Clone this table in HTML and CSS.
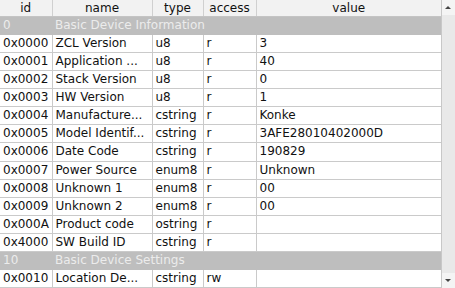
FILE: index.html
```html
<!DOCTYPE html>
<html lang="en">
<head>
  <meta charset="UTF-8">
  <title>Basic cluster attributes</title>
  <link rel="stylesheet" href="styles.css">
</head>
<body>
  <div class="view">
    <table class="attr-table">
      <colgroup>
        <col class="col-id">
        <col class="col-name">
        <col class="col-type">
        <col class="col-access">
        <col class="col-value">
      </colgroup>
      <thead>
        <tr>
          <th>id</th>
          <th>name</th>
          <th>type</th>
          <th>access</th>
          <th>value</th>
        </tr>
      </thead>
      <tbody>
        <tr class="group"><td>0</td><td colspan="4">Basic Device Information</td></tr>
        <tr><td>0x0000</td><td>ZCL Version</td><td>u8</td><td>r</td><td>3</td></tr>
        <tr><td>0x0001</td><td>Application ...</td><td>u8</td><td>r</td><td>40</td></tr>
        <tr><td>0x0002</td><td>Stack Version</td><td>u8</td><td>r</td><td>0</td></tr>
        <tr><td>0x0003</td><td>HW Version</td><td>u8</td><td>r</td><td>1</td></tr>
        <tr><td>0x0004</td><td>Manufacture...</td><td>cstring</td><td>r</td><td>Konke</td></tr>
        <tr><td>0x0005</td><td>Model Identif...</td><td>cstring</td><td>r</td><td>3AFE28010402000D</td></tr>
        <tr><td>0x0006</td><td>Date Code</td><td>cstring</td><td>r</td><td>190829</td></tr>
        <tr><td>0x0007</td><td>Power Source</td><td>enum8</td><td>r</td><td>Unknown</td></tr>
        <tr><td>0x0008</td><td>Unknown 1</td><td>enum8</td><td>r</td><td>00</td></tr>
        <tr><td>0x0009</td><td>Unknown 2</td><td>enum8</td><td>r</td><td>00</td></tr>
        <tr><td>0x000A</td><td>Product code</td><td>ostring</td><td>r</td><td></td></tr>
        <tr><td>0x4000</td><td>SW Build ID</td><td>cstring</td><td>r</td><td></td></tr>
        <tr class="group"><td>10</td><td colspan="4">Basic Device Settings</td></tr>
        <tr><td>0x0010</td><td>Location De...</td><td>cstring</td><td>rw</td><td></td></tr>
      </tbody>
    </table>

    <div class="scrollbar">
      <div class="arrow arrow-up"></div>
      <div class="track"></div>
      <div class="arrow arrow-down"></div>
    </div>
  </div>
</body>
</html>
```

FILE: styles.css
```css
body {
  margin: 0;
  font-family: 'DejaVu Sans', sans-serif;
  font-size: 12px;
  color: #111;
  background-color: #ffffff;
}
.view {
  display: flex;
  width: 455px;
  height: 288px;
  overflow: hidden;
}
.attr-table {
  width: 441px;
  table-layout: fixed;
  border-collapse: collapse;
  flex: none;
  font-size: 12px;
}
.col-id { width: 52px; }
.col-name { width: 100px; }
.col-type { width: 51px; }
.col-access { width: 53px; }
.col-value { width: 185px; }
.attr-table th {
  height: 16px;
  padding: 0;
  font-weight: normal;
  text-align: center;
  background-color: #f2f2f2;
  border-right: 1px solid #d0d0d0;
  border-bottom: 1px solid #c4c4c4;
  line-height: 16px;
}
.attr-table td {
  height: 17px;
  padding: 0 0 0 3px;
  white-space: nowrap;
  overflow: hidden;
  border-right: 1px solid #cacaca;
  border-bottom: 1px solid #cacaca;
  line-height: 17px;
}
.attr-table th:last-child,
.attr-table td:last-child {
  border-right: none;
}
.group td {
  background-color: #bebebe;
  color: #ececec;
  border-right: none;
  border-bottom-color: #bebebe;
}
.scrollbar {
  width: 14px;
  flex: none;
  display: flex;
  flex-direction: column;
  background-color: #ececec;
  border-left: 1px solid #c8c8c8;
  box-sizing: border-box;
}
.arrow {
  height: 15px;
  position: relative;
  background-color: #f4f4f4;
}
.track {
  flex: 1;
  background-color: #e9e9e9;
}
.arrow::after {
  content: '';
  position: absolute;
  left: 3px;
  top: 6px;
  border-left: 3px solid transparent;
  border-right: 3px solid transparent;
}
.arrow-up::after {
  border-bottom: 3px solid #444;
}
.arrow-down::after {
  border-top: 3px solid #444;
}
```
